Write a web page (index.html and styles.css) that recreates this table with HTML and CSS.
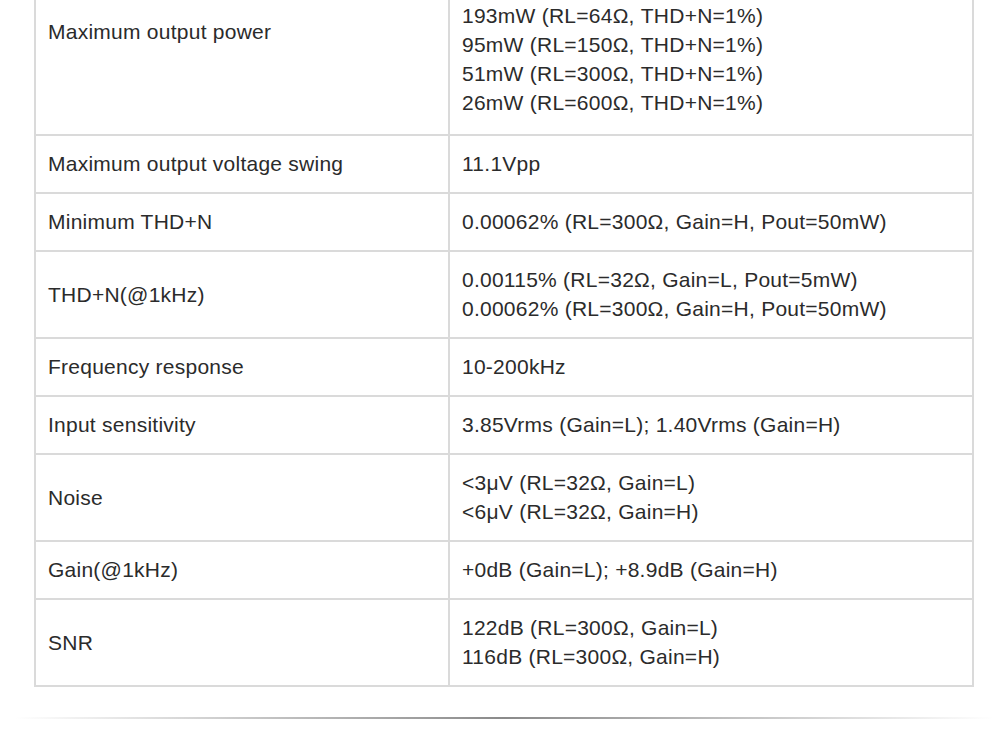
FILE: index.html
```html
<!DOCTYPE html>
<html lang="en">
<head>
	<meta charset="UTF-8">
	<title>Specifications</title>
	<link rel="stylesheet" href="styles.css">
</head>
<body>
	<div class="spec">
		<table class="spec-table">
			<tr class="row-first">
				<td class="name name-top">Maximum output power</td>
				<td class="value">193mW (RL=64Ω, THD+N=1%)<br>95mW (RL=150Ω, THD+N=1%)<br>51mW (RL=300Ω, THD+N=1%)<br>26mW (RL=600Ω, THD+N=1%)</td>
			</tr>
			<tr>
				<td class="name">Maximum output voltage swing</td>
				<td class="value">11.1Vpp</td>
			</tr>
			<tr>
				<td class="name">Minimum THD+N</td>
				<td class="value">0.00062% (RL=300Ω, Gain=H, Pout=50mW)</td>
			</tr>
			<tr>
				<td class="name">THD+N(@1kHz)</td>
				<td class="value">0.00115% (RL=32Ω, Gain=L, Pout=5mW)<br>0.00062% (RL=300Ω, Gain=H, Pout=50mW)</td>
			</tr>
			<tr>
				<td class="name">Frequency response</td>
				<td class="value">10-200kHz</td>
			</tr>
			<tr>
				<td class="name">Input sensitivity</td>
				<td class="value">3.85Vrms (Gain=L); 1.40Vrms (Gain=H)</td>
			</tr>
			<tr>
				<td class="name">Noise</td>
				<td class="value">&lt;3μV (RL=32Ω, Gain=L)<br>&lt;6μV (RL=32Ω, Gain=H)</td>
			</tr>
			<tr>
				<td class="name">Gain(@1kHz)</td>
				<td class="value">+0dB (Gain=L); +8.9dB (Gain=H)</td>
			</tr>
			<tr>
				<td class="name">SNR</td>
				<td class="value">122dB (RL=300Ω, Gain=L)<br>116dB (RL=300Ω, Gain=H)</td>
			</tr>
		</table>
		<div class="rule"></div>
	</div>
</body>
</html>
```

FILE: styles.css
```css
body {
	margin: 0;
	background: #fff;
	font-family: "Liberation Sans", Arial, sans-serif;
	color: #2b2b2b;
}
.spec {
	margin-top: -14px;
	padding: 0 26px 0 34px;
}
.spec-table {
	width: 940px;
	border-collapse: collapse;
	font-size: 21px;
	line-height: 29px;
	letter-spacing: 0.25px;
}
.spec-table td {
	border: 2px solid #dadada;
	padding: 13px 12px 14px;
	vertical-align: middle;
}
.spec-table .name {
	width: 388px;
}
.row-first .value {
	padding-bottom: 17px;
}
.spec-table .name-top {
	vertical-align: top;
	padding-top: 29px;
}
.rule {
	height: 2px;
	margin: 30px -19px 0 -19px;
	background: linear-gradient(to right, rgba(120,120,120,0), #8a8a8a 50%, rgba(120,120,120,0));
}
```
